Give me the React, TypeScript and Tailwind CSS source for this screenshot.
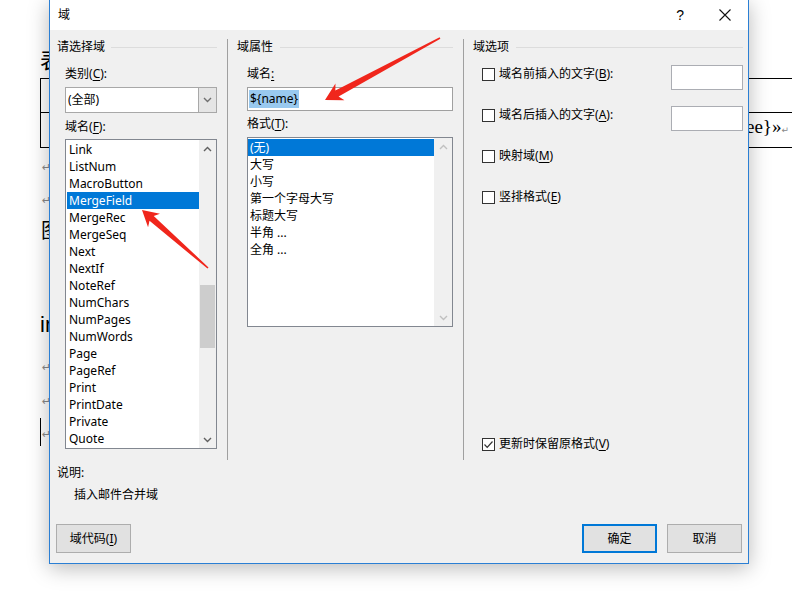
import React from "react";

const fieldNames = [
  "Link", "ListNum", "MacroButton", "MergeField", "MergeRec", "MergeSeq",
  "Next", "NextIf", "NoteRef", "NumChars", "NumPages", "NumWords",
  "Page", "PageRef", "Print", "PrintDate", "Private", "Quote",
];

const formats = ["(无)", "大写", "小写", "第一个字母大写", "标题大写", "半角 ...", "全角 ..."];

// arrow polygon from tip back to tail, computed once
const arrowPoints = (tip: [number, number], tail: [number, number], len = 16, half = 9, shaft = 3.2) => {
  const dx = tail[0] - tip[0];
  const dy = tail[1] - tip[1];
  const d = Math.hypot(dx, dy);
  const u = [dx / d, dy / d];
  const n = [-u[1], u[0]];
  const p = (a: number, b: number) => `${tip[0] + u[0] * a + n[0] * b},${tip[1] + u[1] * a + n[1] * b}`;
  const e = (b: number) => `${tail[0] + n[0] * b},${tail[1] + n[1] * b}`;
  return [p(0, 0), p(len, half), p(len * 0.8, shaft), e(0.8), e(-0.8), p(len * 0.8, -shaft), p(len, -half)].join(" ");
};

const Chevron = ({ up, color }: { up?: boolean; color: string }) => (
  <svg width="9" height="6" viewBox="0 0 9 6">
    <path d={up ? "M1 5 L4.5 1.5 L8 5" : "M1 1 L4.5 4.5 L8 1"} fill="none" stroke={color} strokeWidth="1.4" />
  </svg>
);

const Acc = ({ pre, k, post = "" }: { pre: string; k: string; post?: string }) => (
  <span>
    {pre}(<u className="underline-offset-2">{k}</u>){post}
  </span>
);

const CheckBox = ({ checked }: { checked?: boolean }) => (
  <span className="w-[13px] h-[13px] border border-[#333333] bg-white flex items-center justify-center shrink-0">
    {checked && (
      <svg width="11" height="11" viewBox="0 0 11 11">
        <path d="M1.5 5.5 L4.2 8.3 L9.5 2.5" fill="none" stroke="#333333" strokeWidth="1.2" />
      </svg>
    )}
  </span>
);

const GroupHeader = ({ title, gap }: { title: string; gap: string }) => (
  <div className="flex items-center h-[16px]">
    <span>{title}</span>
    <div className={`flex-1 h-px bg-[#dcdcdc] ${gap}`} />
  </div>
);

export default function App() {
  return (
    <div className="relative w-[792px] h-[612px] bg-white overflow-hidden font-['Noto_Sans','Noto_Sans_CJK_SC',sans-serif] text-[12px] text-black">
      {/* Word document behind the dialog */}
      <div className="absolute inset-0 font-['Liberation_Serif','Noto_Sans_CJK_SC',serif]">
        <div className="absolute left-[40px] top-[50px] text-[22px] leading-none">表</div>
        <div className="absolute left-[40px] top-[78px] w-[40px] h-[70px] border border-black flex flex-col">
          <div className="h-[34px] border-b border-black" />
        </div>
        <div className="absolute left-[42px] top-[160px] text-[11px] text-[#888888] font-['DejaVu_Sans']">↵</div>
        <div className="absolute left-[42px] top-[193px] text-[11px] text-[#888888] font-['DejaVu_Sans']">↵</div>
        <div className="absolute left-[41px] top-[221px] text-[20px] leading-none">图</div>
        <div className="absolute left-[40px] top-[314px] text-[22px] leading-none font-['Liberation_Sans']">in</div>
        <div className="absolute left-[42px] top-[360px] text-[11px] text-[#888888] font-['DejaVu_Sans']">↵</div>
        <div className="absolute left-[42px] top-[394px] text-[11px] text-[#888888] font-['DejaVu_Sans']">↵</div>
        <div className="absolute left-[42px] top-[427px] text-[11px] text-[#888888] font-['DejaVu_Sans']">↵</div>
        <div className="absolute left-[40px] top-[418px] w-px h-[28px] bg-black" />
        <div className="absolute left-[748px] top-[78px] w-[50px] h-px bg-black" />
        <div className="absolute left-[748px] top-[112px] w-[50px] h-px bg-black" />
        <div className="absolute left-[748px] top-[147px] w-[50px] h-px bg-black" />
        <div className="absolute left-[746px] top-[117px] text-[19px] leading-none whitespace-nowrap">
          {"ee}»"}<span className="text-[9px] text-[#888888] font-['DejaVu_Sans']">↵</span>
        </div>
      </div>

      {/* Dialog */}
      <div className="relative z-10 ml-[49px] w-[700px] h-[564px] border-x border-b border-[#2b7fd4] bg-[#f0f0f0] shadow-[0_4px_20px_rgba(0,0,0,0.28)] flex flex-col">
        <div className="h-[30px] bg-white flex items-center pl-[8px]">
          <span className="text-[12px]">域</span>
          <span className="ml-auto text-[14px] mr-[35px] font-['Liberation_Sans']">?</span>
          <svg width="12" height="12" viewBox="0 0 12 12" className="mr-[17px]">
            <path d="M0.5 0.5 L11.5 11.5 M11.5 0.5 L0.5 11.5" stroke="#111111" strokeWidth="1.1" />
          </svg>
        </div>

        <div className="flex h-[421px] mt-[9px]">
          {/* 请选择域 */}
          <div className="w-[177px] pl-[7px] pr-[10px] flex flex-col">
            <GroupHeader title="请选择域" gap="ml-[6px]" />
            <div className="pl-[8px] flex flex-col">
              <div className="mt-[11px] h-[16px] leading-[16px]"><Acc pre="类别" k="C" post=":" /></div>
              <div className="mt-[5px] h-[26px] border border-[#a8a8a8] bg-white flex">
                <div className="flex-1 pl-[2px] flex items-center">(全部)</div>
                <div className="w-[18px] bg-[#e5e5e5] border-l border-[#a8a8a8] flex items-center justify-center">
                  <Chevron color="#707070" />
                </div>
              </div>
              <div className="mt-[6px] h-[16px] leading-[16px]"><Acc pre="域名" k="F" post=":" /></div>
              <div className="mt-[4px] h-[310px] border border-[#828790] bg-white flex">
                <div className="flex-1 pl-px pt-px">
                  {fieldNames.map((n) => (
                    <div
                      key={n}
                      className={`h-[17px] leading-[17px] pl-[2px] ${n === "MergeField" ? "bg-[#0078d7] text-white" : ""}`}
                    >
                      {n}
                    </div>
                  ))}
                </div>
                <div className="w-[17px] bg-[#f0f0f0] flex flex-col">
                  <div className="h-[17px] flex items-center justify-center"><Chevron up color="#606060" /></div>
                  <div className="flex-1">
                    <div className="mt-[128px] mx-px h-[63px] bg-[#cdcdcd]" />
                  </div>
                  <div className="h-[17px] flex items-center justify-center"><Chevron color="#606060" /></div>
                </div>
              </div>
            </div>
          </div>

          {/* 域属性 */}
          <div className="w-[236px] border-l border-[#a0a0a0] pl-[9px] pr-[10px] flex flex-col">
            <GroupHeader title="域属性" gap="ml-[7px]" />
            <div className="pl-[10px] flex flex-col">
              <div className="mt-[11px] h-[16px] leading-[16px]">域名<u className="underline-offset-2">:</u></div>
              <div className="mt-[5px] h-[24px] border border-[#a0a0a0] bg-white flex items-center pl-px">
                <span className="bg-[#99c9ef] px-px leading-[18px]">{"${name}"}</span>
              </div>
              <div className="mt-[5px] h-[16px] leading-[16px]"><Acc pre="格式" k="T" post=":" /></div>
              <div className="mt-[5px] h-[190px] border border-[#828790] bg-white flex">
                <div className="flex-1 pt-px">
                  {formats.map((f) => (
                    <div
                      key={f}
                      className={`h-[17px] leading-[17px] pl-[2px] ${f === "(无)" ? "bg-[#0078d7] text-white" : ""}`}
                    >
                      {f}
                    </div>
                  ))}
                </div>
                <div className="w-[18px] bg-[#f0f0f0] flex flex-col justify-between">
                  <div className="h-[17px] flex items-center justify-center"><Chevron up color="#c0c0c0" /></div>
                  <div className="h-[17px] flex items-center justify-center"><Chevron color="#c0c0c0" /></div>
                </div>
              </div>
            </div>
          </div>

          {/* 域选项 */}
          <div className="flex-1 border-l border-[#a0a0a0] pl-[9px] pr-[5px] flex flex-col">
            <GroupHeader title="域选项" gap="ml-[7px]" />
            <div className="mt-[10px] h-[25px] flex items-start pl-[9px]">
              <div className="mt-[1px] h-[16px] flex items-center">
                <CheckBox />
                <span className="ml-[4px]"><Acc pre="域名前插入的文字" k="B" post=":" /></span>
              </div>
              <div className="ml-auto w-[72px] h-[25px] border border-[#abadb3] bg-white" />
            </div>
            <div className="mt-[16px] h-[25px] flex items-start pl-[9px]">
              <div className="mt-[1px] h-[16px] flex items-center">
                <CheckBox />
                <span className="ml-[4px]"><Acc pre="域名后插入的文字" k="A" post=":" /></span>
              </div>
              <div className="ml-auto w-[72px] h-[25px] border border-[#abadb3] bg-white" />
            </div>
            <div className="mt-[17px] h-[16px] flex items-center pl-[9px]">
              <CheckBox />
              <span className="ml-[4px]"><Acc pre="映射域" k="M" /></span>
            </div>
            <div className="mt-[25px] h-[16px] flex items-center pl-[9px]">
              <CheckBox />
              <span className="ml-[4px]"><Acc pre="竖排格式" k="E" /></span>
            </div>
            <div className="mt-auto mb-[8px] h-[16px] flex items-center pl-[9px]">
              <CheckBox checked />
              <span className="ml-[4px]"><Acc pre="更新时保留原格式" k="V" /></span>
            </div>
          </div>
        </div>

        <div className="mt-[5px] pl-[7px] h-[16px] leading-[16px]">说明:</div>
        <div className="mt-[6px] pl-[24px] h-[16px] leading-[16px]">插入邮件合并域</div>

        <div className="mt-[21px] px-[6px] flex">
          <button className="w-[75px] h-[29px] bg-[#e1e1e1] border border-[#adadad] flex items-center justify-center">
            域代码(<u className="underline-offset-2">I</u>)
          </button>
          <button className="ml-auto w-[75px] h-[29px] bg-[#e1e1e1] border-2 border-[#0078d7] flex items-center justify-center">
            确定
          </button>
          <button className="ml-[10px] w-[75px] h-[29px] bg-[#e1e1e1] border border-[#adadad] flex items-center justify-center">
            取消
          </button>
        </div>
      </div>

      {/* red annotation arrows */}
      <svg className="absolute inset-0 z-20 pointer-events-none" width="792" height="612">
        <polygon points={arrowPoints([325, 100], [440, 38], 17, 9.5, 3.4)} fill="#f0261c" />
        <polygon points={arrowPoints([142, 210], [208, 268], 16, 9, 3.2)} fill="#f0261c" />
      </svg>
    </div>
  );
}
